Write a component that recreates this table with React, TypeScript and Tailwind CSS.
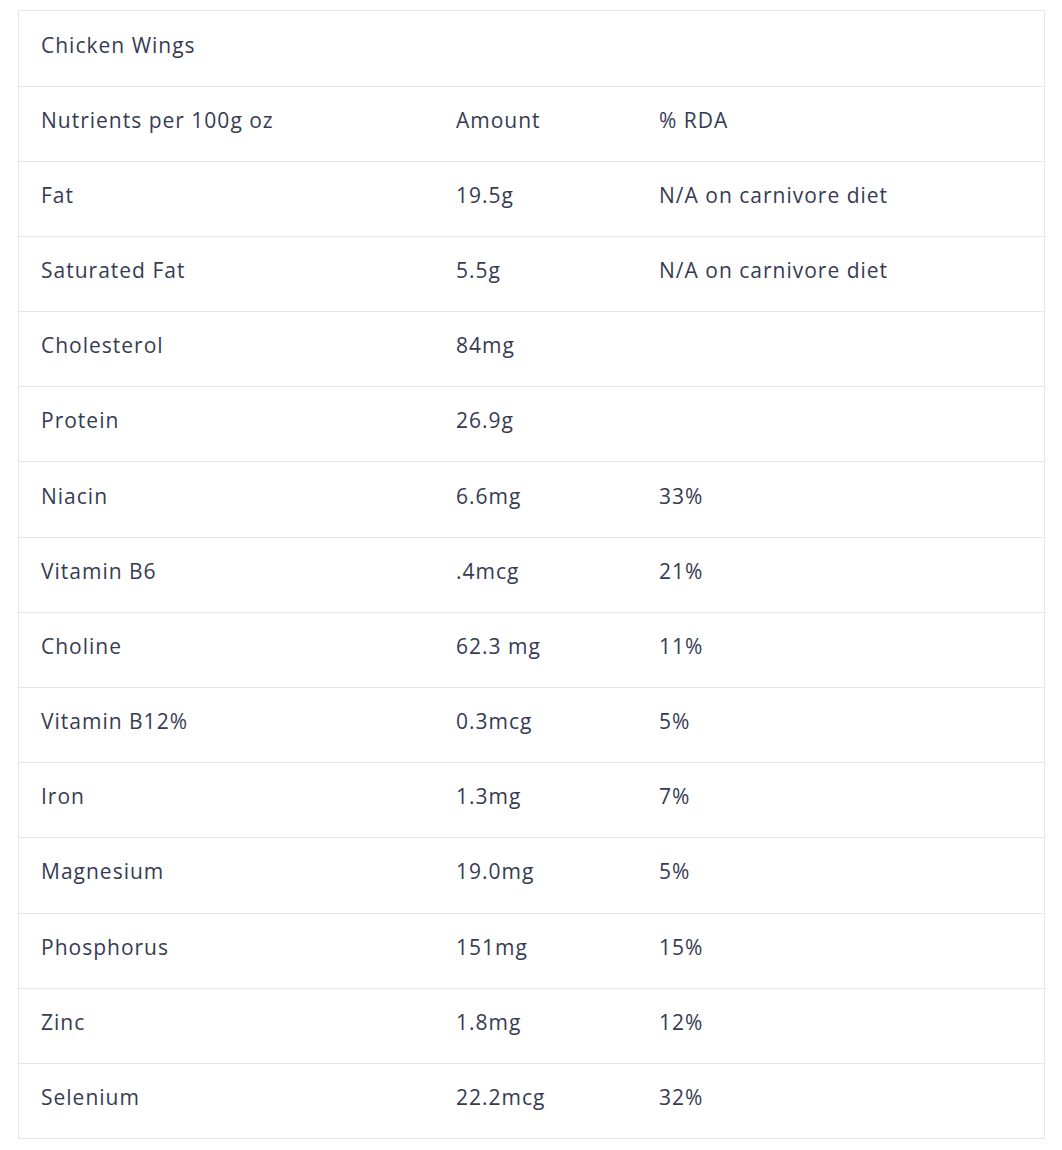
import React from "react";

const rows: [string, string, string][] = [
  ["Nutrients per 100g oz", "Amount", "% RDA"],
  ["Fat", "19.5g", "N/A on carnivore diet"],
  ["Saturated Fat", "5.5g", "N/A on carnivore diet"],
  ["Cholesterol", "84mg", ""],
  ["Protein", "26.9g", ""],
  ["Niacin", "6.6mg", "33%"],
  ["Vitamin B6", ".4mcg", "21%"],
  ["Choline", "62.3 mg", "11%"],
  ["Vitamin B12%", "0.3mcg", "5%"],
  ["Iron", "1.3mg", "7%"],
  ["Magnesium", "19.0mg", "5%"],
  ["Phosphorus", "151mg", "15%"],
  ["Zinc", "1.8mg", "12%"],
  ["Selenium", "22.2mcg", "32%"],
];

export default function App() {
  return (
    <div className="bg-white min-h-[1150px] pt-[10px] pl-[18px] pr-[17px]" style={{ fontFamily: "'Open Sans', sans-serif" }}>
      <div className="border border-[#e6e6e6] text-[#363b54] text-[21px] tracking-[1px] leading-none">
        <div className="h-[74.5px] flex items-center px-[22px] pb-[6px]">Chicken Wings</div>
        {rows.map((r, i) => (
          <div key={i} className="h-[75.2px] border-t border-[#e6e6e6] grid grid-cols-[415px_203px_1fr] items-center pb-[7px]">
            <div className="px-[22px]">{r[0]}</div>
            <div className="px-[22px]">{r[1]}</div>
            <div className="px-[22px]">{r[2]}</div>
          </div>
        ))}
      </div>
    </div>
  );
}
